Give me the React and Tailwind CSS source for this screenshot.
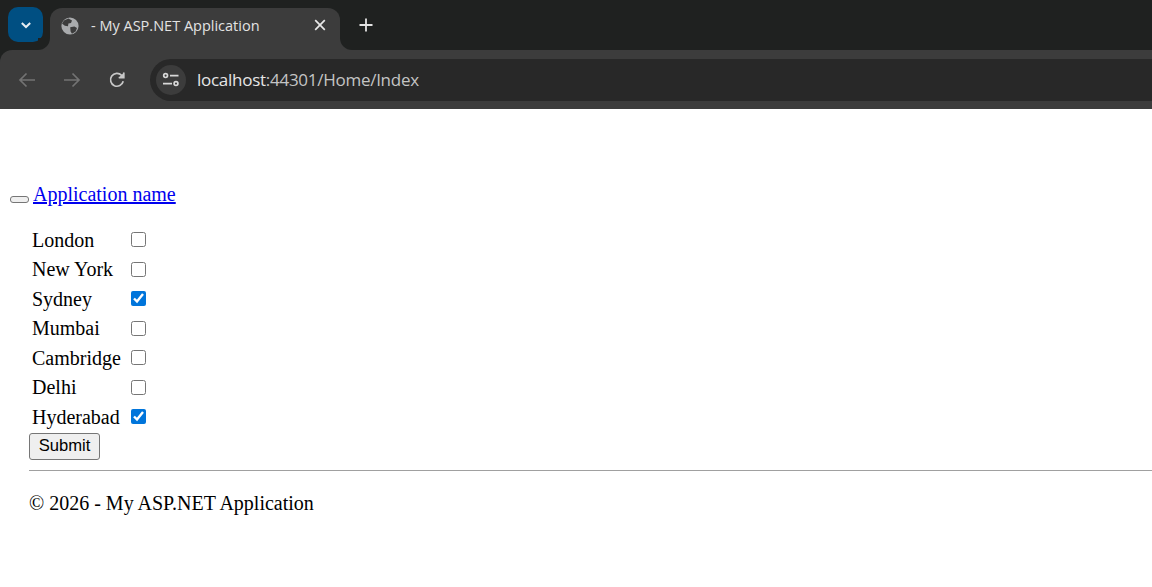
const cities = [
  ['London', false],
  ['New York', false],
  ['Sydney', true],
  ['Mumbai', false],
  ['Cambridge', false],
  ['Delhi', false],
  ['Hyderabad', true],
];

function BrowserChrome() {
  return (
    <div className="font-['Open_Sans',sans-serif]">
      {/* tab strip */}
      <div className="flex h-[50px] items-end bg-[#1f2120] pl-2">
        <div className="mb-[8px] flex h-[35px] w-[35px] items-center justify-center rounded-[10px] bg-[#004f82]">
          <svg width="14" height="14" viewBox="0 0 14 14" fill="none" stroke="#e6edf2" strokeWidth="2">
            <path d="M2.8 5 7 9 11.2 5" />
          </svg>
        </div>
        <div className="relative ml-[7px] flex h-[42px] w-[290px] items-center rounded-t-[12px] bg-[#3c3c3c] pb-[6px] pl-[11px]">
          <svg width="18" height="18" viewBox="0 0 18 18">
            <circle cx="9" cy="9" r="8.6" fill="#a9abad" />
            <path d="M3 3.6 7.4 1.6 11 3.4 10 6 7.4 6.6 7 9.2 3.8 8.8 1 6.4ZM9.2 10.2 13.4 9.6 16 11 14.6 14.6 11 16.8 9.6 14.4Z" fill="#3c3c3c" />
          </svg>
          <span className="ml-[12px] whitespace-nowrap text-[14.5px] leading-none text-[#e3e3e3]">- My ASP.NET Application</span>
          <svg className="absolute left-[264px] top-[11px]" width="12" height="12" viewBox="0 0 12 12" stroke="#e8e8e8" strokeWidth="1.7">
            <path d="M1.2 1.2 10.8 10.8M10.8 1.2 1.2 10.8" />
          </svg>
          {/* flared bottom corners of the active tab */}
          <div className="absolute bottom-0 right-[-12px] h-[12px] w-[12px] bg-[#3c3c3c]">
            <div className="h-full w-full rounded-bl-[12px] bg-[#1f2120]" />
          </div>
          <div className="absolute bottom-0 left-[-12px] h-[12px] w-[12px] bg-[#3c3c3c]">
            <div className="h-full w-full rounded-br-[12px] bg-[#1f2120]" />
          </div>
        </div>
        <div className="mb-[8px] ml-[19px] flex h-[35px] items-center">
          <svg width="14" height="14" viewBox="0 0 14 14" stroke="#e3e3e3" strokeWidth="1.8">
            <path d="M7 0.5V13.5M0.5 7H13.5" />
          </svg>
        </div>
      </div>

      {/* toolbar */}
      <div className="flex h-[59px] items-center rounded-tl-[12px] bg-[#3c3c3c] pl-[18px] shadow-[-12px_0_0_0_#1f2120]">
        <svg width="18" height="16" viewBox="0 0 18 16" fill="none" stroke="#737373" strokeWidth="1.7">
          <path d="M17 8H2M8.5 1.5 2 8l6.5 6.5" />
        </svg>
        <svg className="ml-[27px]" width="18" height="16" viewBox="0 0 18 16" fill="none" stroke="#737373" strokeWidth="1.7">
          <path d="M1 8H16M9.5 1.5 16 8l-6.5 6.5" />
        </svg>
        <svg className="ml-[27px]" width="18" height="18" viewBox="0 0 18 18" fill="none" stroke="#c8c8c8" strokeWidth="1.7">
          <path d="M15.2 10.2A6.4 6.4 0 1 1 13.6 4.4L15.6 6.4" />
          <path d="M16 1.4V7H10.4" fill="#c8c8c8" stroke="none" />
          <path d="M15.8 1.6V6.6H10.8" />
        </svg>
        <div className="ml-[24px] flex h-[42px] flex-1 items-center rounded-l-[21px] bg-[#282828] pl-[6px]">
          <div className="flex h-[30px] w-[30px] items-center justify-center rounded-full bg-[#3c3c3c]">
            <svg width="18" height="16" viewBox="0 0 18 16" fill="none" stroke="#d8d8d8" strokeWidth="1.7">
              <circle cx="3.6" cy="3.6" r="1.9" />
              <path d="M8 3.6H16.5M1 11.6H10" />
              <circle cx="14" cy="11.6" r="1.9" />
            </svg>
          </div>
          <span className="ml-[11px] whitespace-nowrap text-[17px] leading-none tracking-[-0.27px] text-[#e6e6e6]">
            localhost<span className="text-[#c4c4c4]">:44301/Home/Index</span>
          </span>
        </div>
      </div>
    </div>
  );
}

export default function App() {
  return (
    <div className="min-h-[587px] bg-white font-['Liberation_Serif',serif] text-[20px] leading-[23px] text-black">
      <BrowserChrome />

      {/* navbar */}
      <div className="flex items-end pl-[10px] pt-[74px]">
        <button className="mb-[3px] h-[7px] w-[19px] rounded-[3px] border border-[#767676] bg-[#efefef]" />
        <a href="#" className="ml-[4px] text-[#0000ee] underline">Application name</a>
      </div>

      {/* city list */}
      <div className="pl-[29px] pt-[19.5px]">
        <div className="grid w-fit grid-cols-[102px_auto]">
          {cities.map(([name, checked]) => (
            <div key={name} className="col-span-2 grid h-[29.5px] grid-cols-subgrid items-center pl-[3px]">
              <span>{name}</span>
              <input type="checkbox" defaultChecked={checked} className="m-0 mb-[1px] h-[15px] w-[15px] accent-[#0075db]" />
            </div>
          ))}
        </div>
        <button className="mt-[1px] block h-[27px] w-[71px] rounded-[3px] border border-[#767676] bg-[#efefef] font-['Liberation_Sans',sans-serif] text-[16.6px] leading-none">
          Submit
        </button>
        <hr className="mt-[10px] border-t border-[#a0a0a0]" />
        <p className="mt-[20.5px]">© 2026 - My ASP.NET Application</p>
      </div>
    </div>
  );
}
